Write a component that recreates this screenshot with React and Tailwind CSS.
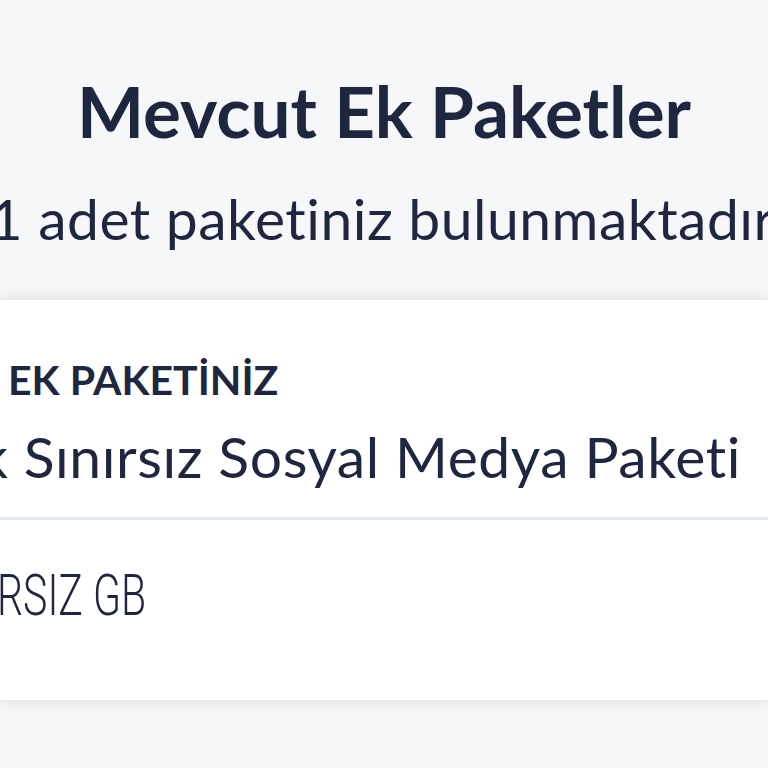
export default function App() {
  return (
    <div
      className="w-[768px] h-[768px] overflow-hidden bg-[#f6f7f9] text-[#1f2740] flex flex-col"
      style={{ fontFamily: "Lato, 'Noto Sans', sans-serif" }}
    >
      <div className="h-[300px] flex flex-col items-center shrink-0 overflow-hidden">
        <h1 className="mt-[76px] text-[71px] leading-[70px] font-bold whitespace-nowrap">
          Mevcut Ek Paketler
        </h1>
        <p className="mt-[42px] ml-[8px] text-[57px] leading-[60px] whitespace-nowrap tracking-[0.5px]">
          1 adet paketiniz bulunmaktadır.
        </p>
      </div>
      <div className="bg-white shadow-[0_0_14px_rgba(0,0,0,0.12)] flex flex-col shrink-0">
        <div className="h-[217px] flex flex-col overflow-hidden">
          <div className="mt-[60px] pl-[8px] text-[41px] leading-[40px] font-bold whitespace-nowrap">
            EK PAKETİNİZ
          </div>
          <div className="mt-[26px] -ml-[21px] text-[57px] leading-[60px] whitespace-nowrap tracking-[0.6px]">
            k Sınırsız Sosyal Medya Paketi
          </div>
        </div>
        <div className="h-[3px] bg-[#e1e8f0]"></div>
        <div className="h-[180px] flex flex-col overflow-hidden">
          <div
            className="mt-[46px] -ml-[3px] text-[57px] leading-[60px] font-light whitespace-nowrap origin-left scale-x-[0.72]"
            style={{ fontFamily: "Roboto, 'Liberation Sans', sans-serif" }}
          >
            RSIZ GB
          </div>
        </div>
      </div>
    </div>
  );
}
